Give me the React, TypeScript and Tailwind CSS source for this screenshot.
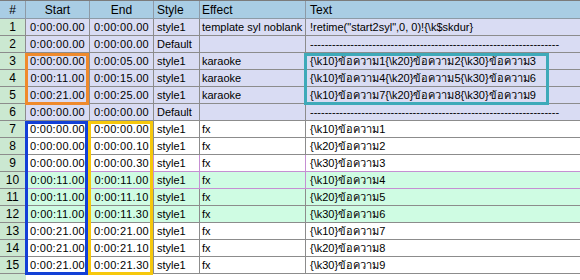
import React from 'react';

type Row = {
  start: string;
  end: string;
  style: string;
  effect: string;
  text: string;
  tone: 'lav' | 'white' | 'mint';
};

const k = (n: number, t: string) => `{\\k${n}}ข้อความ${t}`;
const dashes = '-'.repeat(68);

const rows: Row[] = [
  { start: '0:00:00.00', end: '0:00:00.00', style: 'style1', effect: 'template syl noblank', text: '!retime("start2syl",0, 0)!{\\k$skdur}', tone: 'lav' },
  { start: '0:00:00.00', end: '0:00:00.00', style: 'Default', effect: '', text: dashes, tone: 'lav' },
  { start: '0:00:00.00', end: '0:00:05.00', style: 'style1', effect: 'karaoke', text: k(10, '1') + k(20, '2') + k(30, '3'), tone: 'lav' },
  { start: '0:00:11.00', end: '0:00:15.00', style: 'style1', effect: 'karaoke', text: k(10, '4') + k(20, '5') + k(30, '6'), tone: 'lav' },
  { start: '0:00:21.00', end: '0:00:25.00', style: 'style1', effect: 'karaoke', text: k(10, '7') + k(20, '8') + k(30, '9'), tone: 'lav' },
  { start: '0:00:00.00', end: '0:00:00.00', style: 'Default', effect: '', text: dashes, tone: 'lav' },
  { start: '0:00:00.00', end: '0:00:00.00', style: 'style1', effect: 'fx', text: k(10, '1'), tone: 'white' },
  { start: '0:00:00.00', end: '0:00:00.10', style: 'style1', effect: 'fx', text: k(20, '2'), tone: 'white' },
  { start: '0:00:00.00', end: '0:00:00.30', style: 'style1', effect: 'fx', text: k(30, '3'), tone: 'white' },
  { start: '0:00:11.00', end: '0:00:11.00', style: 'style1', effect: 'fx', text: k(10, '4'), tone: 'mint' },
  { start: '0:00:11.00', end: '0:00:11.10', style: 'style1', effect: 'fx', text: k(20, '5'), tone: 'mint' },
  { start: '0:00:11.00', end: '0:00:11.30', style: 'style1', effect: 'fx', text: k(30, '6'), tone: 'mint' },
  { start: '0:00:21.00', end: '0:00:21.00', style: 'style1', effect: 'fx', text: k(10, '7'), tone: 'white' },
  { start: '0:00:21.00', end: '0:00:21.10', style: 'style1', effect: 'fx', text: k(20, '8'), tone: 'white' },
  { start: '0:00:21.00', end: '0:00:21.30', style: 'style1', effect: 'fx', text: k(30, '9'), tone: 'white' },
];

const toneBg = {
  lav: 'bg-[#d9dcf3]',
  white: 'bg-white',
  mint: 'bg-[#cffce3]',
};

const cols = 'grid grid-cols-[26px_64px_64px_46px_106px_1fr]';

export default function App() {
  return (
    <div
      className="relative w-[580px] h-[280px] overflow-hidden bg-white text-black text-[11px] leading-none"
      style={{ fontFamily: "'Liberation Sans', 'Noto Sans', 'DejaVu Sans', sans-serif" }}
    >
      {/* Header */}
      <div className={`${cols} h-[19px] border-t border-[#7b7b7b] bg-[#a9cde4] text-[12px]`}>
        <div className="flex items-center justify-center border-r border-b border-[#8d9aa6]">#</div>
        <div className="flex items-center justify-center border-r border-b border-[#8d9aa6]">Start</div>
        <div className="flex items-center justify-center border-r border-b border-[#8d9aa6]">End</div>
        <div className="flex items-center pl-[3px] border-r border-b border-[#8d9aa6]">Style</div>
        <div className="flex items-center pl-[2px] border-r border-b border-[#8d9aa6]">Effect</div>
        <div className="flex items-center pl-[4px] border-b border-[#8d9aa6]">Text</div>
      </div>

      {/* Rows */}
      {rows.map((r, i) => {
        const n = i + 1;
        const line = n === 9 || n === 10 ? 'border-[#c58fd2]' : 'border-[#8c8c8c]';
        return (
          <div key={n} className={`${cols} h-[17px] ${toneBg[r.tone]}`}>
            <div className="flex items-center justify-center bg-[#cbe8d1] text-[12px] border-r border-b border-[#8c8c8c]">{n}</div>
            <div className={`flex items-center justify-center tracking-[0.3px] border-r border-b ${line}`}>{r.start}</div>
            <div className={`flex items-center justify-center tracking-[0.3px] border-r border-b ${line}`}>{r.end}</div>
            <div className={`flex items-center pl-[3px] border-r border-b ${line}`}>{r.style}</div>
            <div className={`flex items-center pl-[2px] border-r border-b ${line}`}>{r.effect}</div>
            <div className={`flex items-center pl-[4px] whitespace-nowrap overflow-hidden border-b ${line}`}>{r.text}</div>
          </div>
        );
      })}

      {/* Empty space below last row */}
      <div className={`${cols} h-[6px]`}>
        <div className="bg-[#cbe8d1]" />
      </div>

      {/* Highlight boxes drawn over the grid */}
      <div className="absolute left-[25px] top-[53px] w-[64px] h-[52px] border-[3px] border-[#ef8a2c] pointer-events-none" />
      <div className="absolute left-[304px] top-[53px] w-[245px] h-[52px] border-[3px] border-[#3eaab9] pointer-events-none" />
      <div className="absolute left-[25px] top-[121px] w-[63px] h-[154px] border-[3px] border-[#1340d6] pointer-events-none" />
      <div className="absolute left-[88px] top-[121px] w-[65px] h-[154px] border-[3px] border-[#f6c80c] pointer-events-none" />
    </div>
  );
}
